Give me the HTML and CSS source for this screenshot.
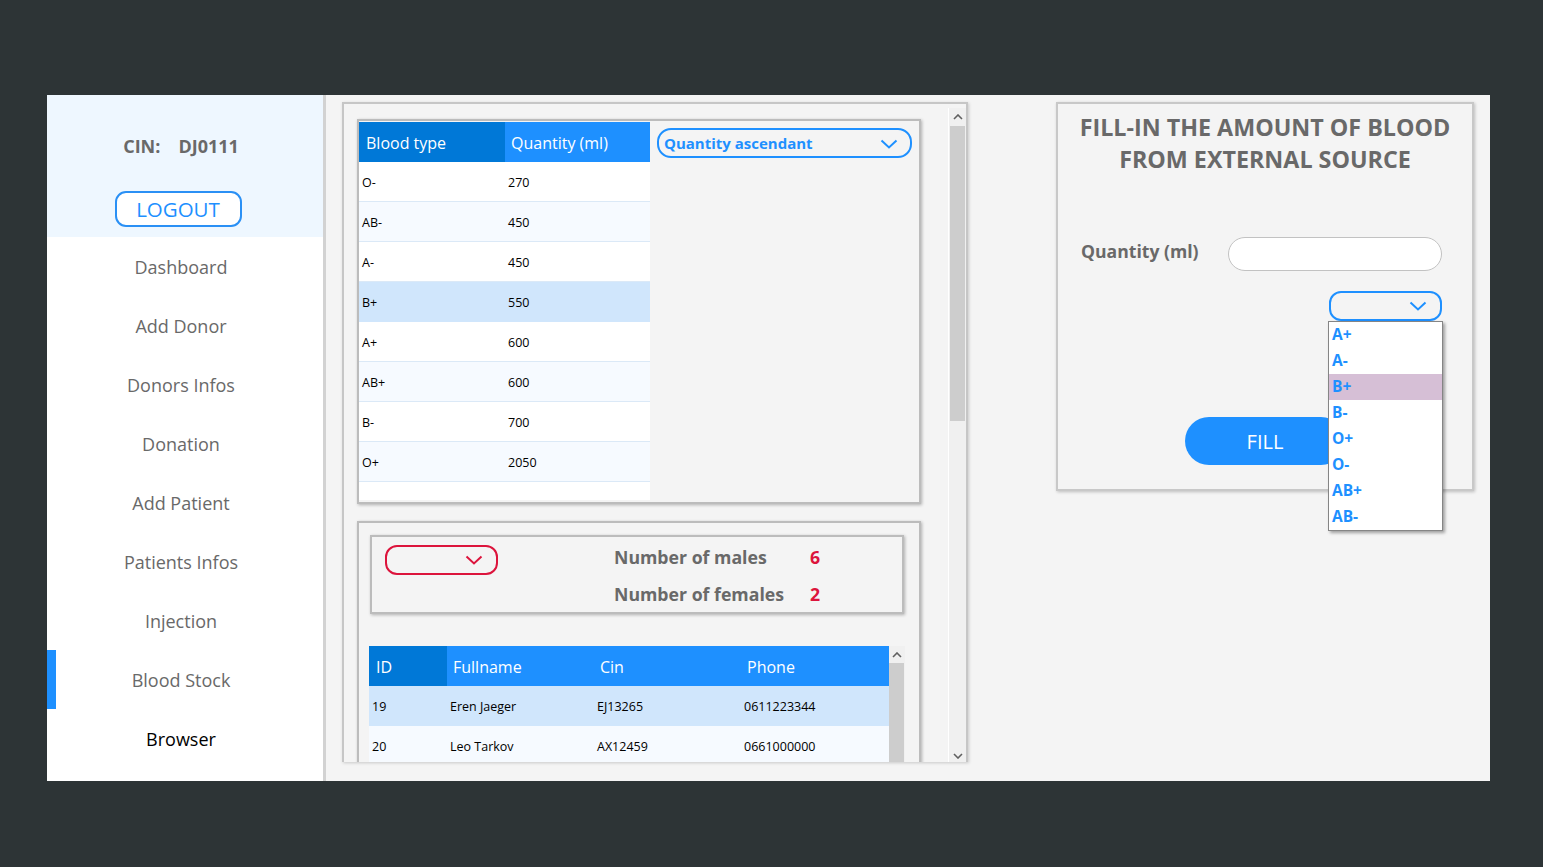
FILE: index.html
```html
<!DOCTYPE html>
<html lang="en">
<head>
<meta charset="utf-8">
<title>Blood Stock</title>
<link rel="stylesheet" href="styles.css">
</head>
<body>
<div class="app">
  <aside class="sidebar">
    <div class="profile">
      <div class="cin"><span>CIN:</span><span>DJ0111</span></div>
      <button class="logout">LOGOUT</button>
    </div>
    <nav class="nav">
      <div class="nav-item">Dashboard</div>
      <div class="nav-item">Add Donor</div>
      <div class="nav-item">Donors Infos</div>
      <div class="nav-item">Donation</div>
      <div class="nav-item">Add Patient</div>
      <div class="nav-item">Patients Infos</div>
      <div class="nav-item">Injection</div>
      <div class="nav-item active">Blood Stock</div>
      <div class="nav-item browser">Browser</div>
    </nav>
  </aside>

  <main class="main">
    <section class="scroll-panel">
      <div class="scroll-content">
        <div class="stock-box">
          <div class="blood-grid">
            <div class="grid-head">
              <div class="hc dark w146">Blood type</div>
              <div class="hc w145">Quantity (ml)</div>
            </div>
            <div class="grid-row"><div class="rc w146">O-</div><div class="rc w145">270</div></div>
            <div class="grid-row alt"><div class="rc w146">AB-</div><div class="rc w145">450</div></div>
            <div class="grid-row"><div class="rc w146">A-</div><div class="rc w145">450</div></div>
            <div class="grid-row sel"><div class="rc w146">B+</div><div class="rc w145">550</div></div>
            <div class="grid-row"><div class="rc w146">A+</div><div class="rc w145">600</div></div>
            <div class="grid-row alt"><div class="rc w146">AB+</div><div class="rc w145">600</div></div>
            <div class="grid-row"><div class="rc w146">B-</div><div class="rc w145">700</div></div>
            <div class="grid-row alt"><div class="rc w146">O+</div><div class="rc w145">2050</div></div>
            <div class="grid-row"><div class="rc w146"></div><div class="rc w145"></div></div>
          </div>
          <div class="combo sort">
            <span>Quantity ascendant</span>
            <svg class="chev" width="18" height="10" viewBox="0 0 18 10"><polyline points="1.5,1.5 9,8.5 16.5,1.5" fill="none" stroke="#1e90ff" stroke-width="2"/></svg>
          </div>
        </div>

        <div class="donor-box">
          <div class="gender-box">
            <div class="combo red">
              <svg class="chev" width="18" height="10" viewBox="0 0 18 10"><polyline points="1.5,1.5 9,8.5 16.5,1.5" fill="none" stroke="#dc143c" stroke-width="2"/></svg>
            </div>
            <div class="counts">
              <div class="count"><span class="lbl">Number of males</span><span class="val">6</span></div>
              <div class="count"><span class="lbl">Number of females</span><span class="val">2</span></div>
            </div>
          </div>

          <div class="donor-table">
            <div class="donor-grid">
              <div class="grid-head">
                <div class="hc dark w78">ID</div>
                <div class="hc w147">Fullname</div>
                <div class="hc w147">Cin</div>
                <div class="hc w148">Phone</div>
              </div>
              <div class="grid-row sel"><div class="rc w78">19</div><div class="rc w147">Eren Jaeger</div><div class="rc w147">EJ13265</div><div class="rc w148">0611223344</div></div>
              <div class="grid-row alt"><div class="rc w78">20</div><div class="rc w147">Leo Tarkov</div><div class="rc w147">AX12459</div><div class="rc w148">0661000000</div></div>
            </div>
            <div class="vscroll small">
              <div class="arrow">
                <svg width="10" height="6" viewBox="0 0 10 6"><polyline points="1,5 5,1 9,5" fill="none" stroke="#606060" stroke-width="1.6"/></svg>
              </div>
              <div class="thumb"></div>
            </div>
          </div>
        </div>
      </div>
      <div class="vscroll main-scroll">
        <div class="arrow">
          <svg width="10" height="6" viewBox="0 0 10 6"><polyline points="1,5 5,1 9,5" fill="none" stroke="#606060" stroke-width="1.6"/></svg>
        </div>
        <div class="thumb"></div>
        <div class="track"></div>
        <div class="arrow down">
          <svg width="10" height="6" viewBox="0 0 10 6"><polyline points="1,1 5,5 9,1" fill="none" stroke="#606060" stroke-width="1.6"/></svg>
        </div>
      </div>
    </section>

    <section class="fill-panel">
      <h1 class="fill-title">FILL-IN THE AMOUNT OF BLOOD<br>FROM EXTERNAL SOURCE</h1>
      <div class="qty-row">
        <label class="qty-label">Quantity (ml)</label>
        <div class="qty-input"></div>
      </div>
      <div class="type-row">
        <div class="combo type">
          <svg class="chev" width="18" height="10" viewBox="0 0 18 10"><polyline points="1.5,1.5 9,8.5 16.5,1.5" fill="none" stroke="#1e90ff" stroke-width="2"/></svg>
          <ul class="type-list">
            <li>A+</li>
            <li>A-</li>
            <li class="hl">B+</li>
            <li>B-</li>
            <li>O+</li>
            <li>O-</li>
            <li>AB+</li>
            <li>AB-</li>
          </ul>
        </div>
      </div>
      <button class="fill-btn">FILL</button>
    </section>
  </main>
</div>
</body>
</html>
```

FILE: styles.css
```css
* { box-sizing: border-box; }
html, body { margin: 0; padding: 0; }
body {
  background: #2d3436;
  font-family: "Open Sans", "Noto Sans", sans-serif;
  width: 1543px;
  height: 867px;
  overflow: hidden;
}

.app {
  margin: 95px 0 0 47px;
  width: 1443px;
  height: 686px;
  display: flex;
  background: #f4f4f4;
}

/* Sidebar */
.sidebar {
  width: 279px;
  flex: none;
  background: #fff;
  border-right: 3px solid #d2d2d2;
  display: flex;
  flex-direction: column;
}
.profile {
  height: 142px;
  background: #eef7ff;
  display: flex;
  flex-direction: column;
  align-items: center;
  padding-top: 35px;
  padding-right: 8px;
}
.cin {
  display: flex;
  gap: 18px;
  font-weight: 700;
  font-size: 18px;
  line-height: 32px;
  color: #696969;
}
.logout {
  margin-top: 29px;
  margin-right: 6px;
  width: 127px;
  height: 36px;
  border: 2px solid #2a90f5;
  border-radius: 11px;
  background: #fff;
  color: #1e90ff;
  font-family: inherit;
  font-size: 20.5px;
  padding: 0;
  line-height: 30px;
}
.nav { display: flex; flex-direction: column; }
.nav-item {
  position: relative;
  height: 59px;
  display: flex;
  align-items: center;
  justify-content: center;
  padding-right: 8px;
  font-size: 18px;
  color: #696969;
}
.nav-item.active::before {
  content: "";
  position: absolute;
  left: 0;
  top: 0;
  bottom: 0;
  width: 9px;
  background: #1e90ff;
}
.nav-item.browser { color: #000; }

/* Main */
.main {
  flex: 1;
  display: flex;
  align-items: flex-start;
  padding: 7px 0 0 16px;
  gap: 88px;
}

.scroll-panel {
  width: 626px;
  height: 660px;
  flex: none;
  display: flex;
  border: 2px solid #c6c6c6;
  border-bottom: none;
  box-shadow: 1px 1px 3px rgba(0,0,0,0.18);
  background: #f4f4f4;
}
.scroll-content {
  flex: 1;
  overflow: hidden;
  padding: 15px 0 0 13px;
}

.vscroll {
  width: 18px;
  flex: none;
  display: flex;
  flex-direction: column;
  background: #f0f0f0;
}
.main-scroll {
  margin-top: 4px;
  border-left: 1px solid #fff;
}
.vscroll .arrow {
  height: 18px;
  display: flex;
  align-items: center;
  justify-content: center;
  flex: none;
}
.vscroll .thumb {
  height: 295px;
  background: #cdcdcd;
  margin: 0 1px;
  flex: none;
}
.vscroll .track { flex: 1; }
.vscroll .arrow.down { height: 12px; }

/* Blood stock box */
.stock-box {
  width: 564px;
  height: 385px;
  border: 2px solid #bcbcbc;
  box-shadow: 1px 1px 3px rgba(0,0,0,0.28);
  display: flex;
  align-items: flex-start;
  padding-top: 1px;
}
.blood-grid {
  width: 291px;
  height: 378px;
  background: #fff;
  overflow: hidden;
  flex: none;
}
.grid-head {
  display: flex;
  height: 40px;
  background: #1e90ff;
  color: #fff;
  font-size: 16px;
}
.hc {
  display: flex;
  align-items: center;
  padding: 2px 0 0 6px;
}
.hc.dark { background: #0078d7; padding-left: 7px; }
.grid-row {
  display: flex;
  height: 40px;
  background: #fff;
  border-bottom: 1px solid #dbe9f7;
  font-size: 12.5px;
  color: #000;
}
.grid-row.alt { background: #f6faff; }
.grid-row.sel { background: #d0e6fc; border-bottom-color: #d0e6fc; }
.rc {
  display: flex;
  align-items: center;
  padding: 2px 0 0 3px;
  white-space: nowrap;
}
.w146 { width: 146px; }
.w145 { width: 145px; }
.w78 { width: 78px; }
.w147 { width: 147px; }
.w148 { width: 148px; }

.combo {
  position: relative;
  height: 30px;
  border: 2px solid #1e90ff;
  border-radius: 14px;
  display: flex;
  align-items: center;
  flex: none;
}
.combo .chev { position: absolute; top: 9px; }
.combo.sort {
  width: 255px;
  margin: 6px 0 0 7px;
  padding-left: 5px;
  color: #1e90ff;
  font-weight: 700;
  font-size: 15px;
}
.combo.sort .chev { right: 12px; }

/* Donor box */
.donor-box {
  margin-top: 17px;
  width: 564px;
  height: 320px;
  border: 2px solid #bcbcbc;
  border-bottom: none;
  box-shadow: 1px 1px 3px rgba(0,0,0,0.28);
  padding: 12px 0 0 11px;
}
.gender-box {
  width: 534px;
  height: 79px;
  border: 2px solid #bcbcbc;
  box-shadow: 1px 1px 3px rgba(0,0,0,0.28);
  display: flex;
  align-items: flex-start;
}
.combo.red {
  width: 113px;
  margin: 8px 0 0 13px;
  border-color: #dc143c;
  border-radius: 12px;
}
.combo.red .chev { right: 13px; top: 8px; }
.counts {
  margin: 1px 0 0 116px;
  display: flex;
  flex-direction: column;
}
.count {
  height: 37px;
  display: flex;
  align-items: center;
  font-weight: 700;
  font-size: 17.7px;
}
.count .lbl { width: 196px; color: #696969; }
.count .val { color: #dc143c; }

.donor-table {
  margin: 32px 0 0 -1px;
  display: flex;
  height: 140px;
}
.donor-grid { width: 520px; background: #fff; }
.vscroll.small { width: 16px; }
.vscroll.small .arrow { height: 17px; }
.vscroll.small .thumb { flex: 1; height: auto; margin: 0 1px 0 0; }

/* Fill panel */
.fill-panel {
  position: relative;
  width: 418px;
  height: 389px;
  flex: none;
  border: 2px solid #c8c8c8;
  box-shadow: 1px 1px 3px rgba(0,0,0,0.22);
  display: flex;
  flex-direction: column;
  padding-top: 7px;
}
.fill-title {
  margin: 0;
  text-align: center;
  font-size: 23.3px;
  font-weight: 700;
  line-height: 32px;
  color: #696969;
}
.qty-row {
  margin-top: 62px;
  padding: 0 30px 0 23px;
  display: flex;
  align-items: center;
}
.qty-label {
  width: 147px;
  padding-bottom: 6px;
  font-weight: 700;
  font-size: 17.6px;
  color: #696969;
}
.qty-input {
  width: 214px;
  height: 34px;
  background: #fff;
  border: 1px solid #c2c2c2;
  border-radius: 17px;
}
.type-row {
  margin-top: 20px;
  padding: 0 30px 0 23px;
  display: flex;
  justify-content: flex-end;
  position: relative;
  z-index: 2;
}
.combo.type {
  width: 113px;
  border-radius: 12px;
}
.combo.type .chev { right: 13px; top: 8px; }
.type-list {
  position: absolute;
  left: -3px;
  top: 28px;
  width: 115px;
  margin: 0;
  padding: 0;
  list-style: none;
  background: #fff;
  border: 1px solid #858585;
  box-shadow: 2px 2px 3px rgba(0,0,0,0.35);
}
.type-list li {
  height: 26px;
  display: flex;
  align-items: center;
  padding: 0 0 3px 3px;
  color: #1e90ff;
  font-weight: 700;
  font-size: 15.5px;
}
.type-list li.hl { background: #d6bfd6; }
.fill-btn {
  margin-top: 96px;
  align-self: center;
  width: 160px;
  height: 48px;
  border: none;
  border-radius: 24px;
  background: #1e90ff;
  color: #fff;
  font-family: inherit;
  font-size: 20px;
  padding: 0;
}
```
